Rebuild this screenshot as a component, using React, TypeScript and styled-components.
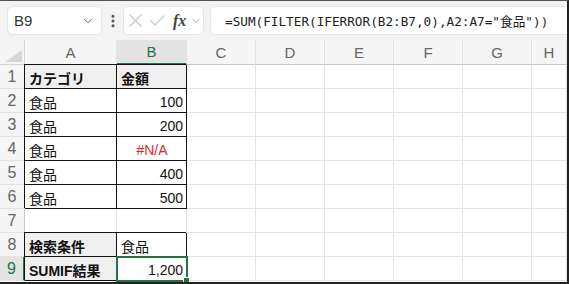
import React from 'react'
import styled, { createGlobalStyle, css } from 'styled-components'
import { ChevronDown, EllipsisVertical } from 'lucide-react'

const GlobalStyle = createGlobalStyle`
  body {
    margin: 0;
    background: #fff;
    font-family: "Liberation Sans", "Noto Sans CJK JP", sans-serif;
  }
`

const Frame = styled.div`
  width: 569px;
  height: 284px;
  box-sizing: border-box;
  border-top: 1px solid #555;
  border-right: 2px solid #222;
  border-bottom: 2px solid #222;
  overflow: hidden;
  display: flex;
  flex-direction: column;
  background: #fff;
`

const Toolbar = styled.div`
  height: 39px;
  flex: none;
  background: #f3f3f3;
  display: flex;
  align-items: center;
  padding-left: 7px;
`

const Box = styled.div`
  height: 29px;
  box-sizing: border-box;
  background: #fff;
  border: 1px solid #e6e6e6;
  border-radius: 5px;
  display: flex;
  align-items: center;
  flex: none;
`

const NameBox = styled(Box)`
  width: 95px;
  padding: 0 6px;
  justify-content: space-between;
  font-size: 15px;
  color: #333;
`

const Grip = styled.div`
  width: 21px;
  flex: none;
  display: flex;
  justify-content: center;
  color: #555;
`

const FxBox = styled(Box)`
  width: 81px;
  padding: 0 0 0 5px;
  gap: 8px;
  & > svg {
    flex: none;
  }
`

const Fx = styled.span`
  font-family: "Liberation Serif", "DejaVu Serif", serif;
  font-style: italic;
  font-weight: bold;
  font-size: 16px;
  color: #444;
  margin-right: -4px;
`

const FormulaBox = styled(Box)`
  flex: 1;
  margin-left: 6px;
  margin-right: -10px;
  padding-left: 14px;
  font-family: "DejaVu Sans Mono", "Noto Sans CJK JP", monospace;
  font-size: 12.7px;
  color: #222;
  white-space: nowrap;
`

const Sheet = styled.div`
  flex: 1;
  display: grid;
  grid-template-columns: 25px 92px 70px repeat(5, 69px) 1fr;
  grid-template-rows: 25px repeat(9, 24px);
`

const Corner = styled.div`
  background: #f5f5f5;
  border-right: 1px solid #d4d4d4;
  border-bottom: 1px solid #d4d4d4;
  display: flex;
  align-items: flex-end;
  justify-content: flex-end;
  padding: 0 2px 2px 0;
`

const ColHead = styled.div<{ $active?: boolean }>`
  background: ${p => (p.$active ? '#e3e3e3' : '#f5f5f5')};
  color: ${p => (p.$active ? '#217346' : '#666')};
  border-right: 1px solid #e2e2e2;
  border-bottom: ${p => (p.$active ? '2px solid #217346' : '1px solid #c8c8c8')};
  display: flex;
  align-items: center;
  justify-content: center;
  font-size: 15px;
`

const RowHead = styled.div<{ $active?: boolean }>`
  background: ${p => (p.$active ? '#e3e3e3' : '#f5f5f5')};
  color: ${p => (p.$active ? '#217346' : '#666')};
  border-right: ${p => (p.$active ? '2px solid #217346' : '1px solid #c8c8c8')};
  border-bottom: 1px solid #e2e2e2;
  display: flex;
  align-items: center;
  justify-content: center;
  font-size: 16px;
`

type CellProps = {
  $align?: 'left' | 'right' | 'center'
  $bold?: boolean
  $shade?: boolean
  $boxed?: boolean
  $color?: string
  $selected?: boolean
}

const Cell = styled.div<CellProps>`
  position: relative;
  box-sizing: border-box;
  background: ${p => (p.$shade ? '#efefef' : '#fff')};
  border-right: 1px solid #e2e2e2;
  border-bottom: 1px solid #e2e2e2;
  display: flex;
  align-items: center;
  padding: 2px 3px 0 4px;
  font-size: 14px;
  color: ${p => p.$color || '#111'};
  font-weight: ${p => (p.$bold ? 700 : 400)};
  justify-content: ${p =>
    p.$align === 'right' ? 'flex-end' : p.$align === 'center' ? 'center' : 'flex-start'};
  white-space: nowrap;
  ${p =>
    p.$boxed &&
    css`
      border-right-color: #111;
      border-bottom-color: #111;
      box-shadow: -1px -1px 0 #111;
    `}
  ${p =>
    p.$selected &&
    css`
      z-index: 2;
      box-shadow: none;
      outline: 2px solid #217346;
      outline-offset: -1px;
      &::after {
        content: '';
        position: absolute;
        right: -4px;
        bottom: -4px;
        width: 5px;
        height: 5px;
        background: #217346;
        border: 1px solid #fff;
      }
    `}
`

type Row = { n: number; a?: CellProps & { text?: string }; b?: CellProps & { text?: string } }

const rows: Row[] = [
  { n: 1, a: { text: 'カテゴリ', $bold: true, $shade: true, $boxed: true }, b: { text: '金額', $bold: true, $shade: true, $boxed: true } },
  { n: 2, a: { text: '食品', $boxed: true }, b: { text: '100', $align: 'right', $boxed: true } },
  { n: 3, a: { text: '食品', $boxed: true }, b: { text: '200', $align: 'right', $boxed: true } },
  { n: 4, a: { text: '食品', $boxed: true }, b: { text: '#N/A', $align: 'center', $color: '#e0282e', $boxed: true } },
  { n: 5, a: { text: '食品', $boxed: true }, b: { text: '400', $align: 'right', $boxed: true } },
  { n: 6, a: { text: '食品', $boxed: true }, b: { text: '500', $align: 'right', $boxed: true } },
  { n: 7 },
  { n: 8, a: { text: '検索条件', $bold: true, $shade: true, $boxed: true }, b: { text: '食品', $boxed: true } },
  { n: 9, a: { text: 'SUMIF結果', $bold: true, $shade: true, $boxed: true }, b: { text: '1,200', $align: 'right', $boxed: true, $selected: true } },
]

const cols = ['A', 'B', 'C', 'D', 'E', 'F', 'G', 'H']

const App = () => {
  return (
    <>
      <GlobalStyle />
      <Frame>
        <Toolbar>
          <NameBox>
            <span>B9</span>
            <ChevronDown size={14} color="#555" strokeWidth={1.6} />
          </NameBox>
          <Grip>
            <EllipsisVertical size={16} strokeWidth={2.6} />
          </Grip>
          <FxBox>
            <svg width="13" height="13" viewBox="0 0 13 13">
              <path d="M0.5 0.5 L12.5 12.5 M12.5 0.5 L0.5 12.5" stroke="#c6c6c6" strokeWidth="1.1" fill="none" />
            </svg>
            <svg width="15" height="11" viewBox="0 0 15 11">
              <path d="M0.5 5.5 L5 10 L14.5 0.5" stroke="#c6c6c6" strokeWidth="1.1" fill="none" />
            </svg>
            <Fx>fx</Fx>
            <ChevronDown size={12} color="#888" strokeWidth={1.5} />
          </FxBox>
          <FormulaBox>=SUM(FILTER(IFERROR(B2:B7,0),A2:A7="食品"))</FormulaBox>
        </Toolbar>
        <Sheet>
          <Corner>
            <svg width="17" height="12" viewBox="0 0 17 12">
              <polygon points="17,0 17,12 0,12" fill="#d6d6d6" />
            </svg>
          </Corner>
          {cols.map(c => (
            <ColHead key={c} $active={c === 'B'}>
              {c}
            </ColHead>
          ))}
          {rows.map(r => {
            const { text: at, ...ap } = r.a || {}
            const { text: bt, ...bp } = r.b || {}
            return (
              <React.Fragment key={r.n}>
                <RowHead $active={r.n === 9}>{r.n}</RowHead>
                <Cell {...ap}>{at}</Cell>
                <Cell {...bp}>{bt}</Cell>
                {cols.slice(2).map(c => (
                  <Cell key={c} />
                ))}
              </React.Fragment>
            )
          })}
        </Sheet>
      </Frame>
    </>
  )
}

export default App
